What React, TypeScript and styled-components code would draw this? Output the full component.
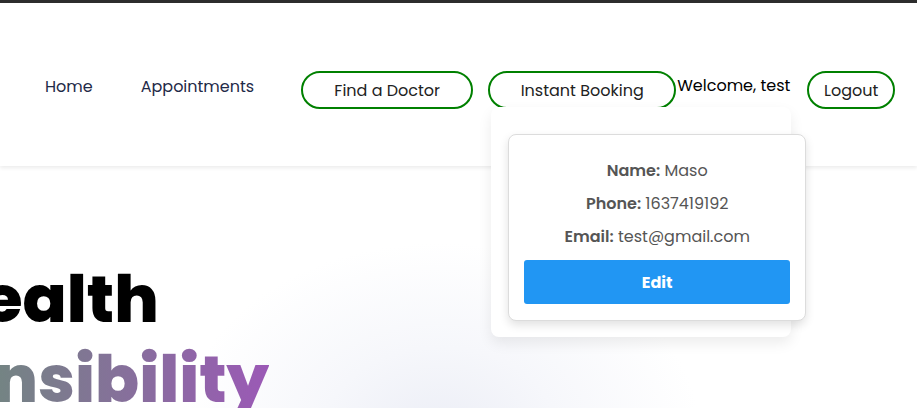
import React from 'react';
import styled, { createGlobalStyle } from 'styled-components';

const GlobalStyle = createGlobalStyle`
  html, body {
    margin: 0;
    padding: 0;
    background: #fff;
    overflow: hidden;
  }
  body {
    font-family: 'Poppins', 'Open Sans', 'Noto Sans', sans-serif;
  }
  * {
    box-sizing: border-box;
  }
`;

const Page = styled.div`
  width: 917px;
  height: 408px;
  border-top: 3px solid #2d2d2d;
  position: relative;
  overflow: hidden;
  background: radial-gradient(
    ellipse 260px 190px at 440px 430px,
    #eceef6 0%,
    #f6f7fb 45%,
    #ffffff 100%
  );
`;

// Navigation header
const Header = styled.header`
  position: relative;
  z-index: 2;
  height: 163px;
  background: #fff;
  box-shadow: 0 2px 4px rgba(0, 0, 0, 0.08);
  display: flex;
  align-items: center;
  padding: 68px 0 57px 45px;
`;

const NavLinks = styled.nav`
  display: flex;
  gap: 48px;
  padding-bottom: 8px;
`;

const NavLink = styled.a`
  color: #1f2a48;
  font-size: 16px;
  text-decoration: none;
  white-space: nowrap;
`;

const Actions = styled.div`
  display: flex;
  align-items: center;
  margin-left: 47px;
`;

const PillButton = styled.button<{ $width: number; $gap?: number }>`
  width: ${(p) => p.$width}px;
  height: 38px;
  margin-right: ${(p) => p.$gap ?? 0}px;
  border: 2px solid #008000;
  border-radius: 20px;
  background: #fff;
  color: #222;
  font-family: inherit;
  font-size: 16px;
  padding: 0;
  cursor: pointer;
  white-space: nowrap;
`;

const BookingWrap = styled.div`
  position: relative;
`;

const Welcome = styled.span`
  display: block;
  width: 130px;
  padding-bottom: 10px;
  color: #000;
  font-size: 16px;
  font-weight: 400;
  white-space: nowrap;
`;

// Dropdown under "Instant Booking"
const Dropdown = styled.div`
  position: absolute;
  top: 36px;
  left: 3px;
  width: 300px;
  height: 230px;
  padding: 27px 0 0 17px;
  background: #fff;
  border-radius: 8px;
  box-shadow: 0 6px 14px rgba(0, 0, 0, 0.08);
`;

const ProfileCard = styled.div`
  width: 298px;
  padding: 19px 15px 16px;
  background: #fff;
  border: 1px solid #dcdcdc;
  border-radius: 8px;
  box-shadow: 0 4px 10px rgba(0, 0, 0, 0.12);
  text-align: center;
`;

const InfoRow = styled.p`
  margin: 0;
  line-height: 33px;
  font-size: 16px;
  color: #555;

  strong {
    font-weight: 600;
  }
`;

const EditButton = styled.button`
  width: 100%;
  height: 44px;
  margin-top: 7px;
  border: none;
  border-radius: 3px;
  background: #2196f3;
  color: #fff;
  font-family: inherit;
  font-size: 16px;
  font-weight: 700;
  cursor: pointer;
`;

// Hero heading, partly cut off at the left edge
const Hero = styled.section`
  padding-top: 94px;
`;

const HeroTitle = styled.h1`
  width: 800px;
  margin: 0 0 0 -440px;
  text-align: center;
  font-family: 'Poppins', 'Open Sans', sans-serif;
  font-size: 65px;
  font-weight: 800;
  line-height: 80px;
  color: #000;
`;

const Gradient = styled.span`
  display: inline-block;
  background: linear-gradient(90deg, #4caf50 12%, #9b59b6 100%);
  -webkit-background-clip: text;
  background-clip: text;
  color: transparent;
`;

export default function App() {
  return (
    <>
      <GlobalStyle />
      <Page>
        <Header>
          <NavLinks>
            <NavLink href="#">Home</NavLink>
            <NavLink href="#">Appointments</NavLink>
          </NavLinks>
          <Actions>
            <PillButton $width={172} $gap={15}>Find a Doctor</PillButton>
            <BookingWrap>
              <PillButton $width={188} $gap={1}>Instant Booking</PillButton>
              <Dropdown>
                <ProfileCard>
                  <InfoRow><strong>Name:</strong> Maso</InfoRow>
                  <InfoRow><strong>Phone:</strong> 1637419192</InfoRow>
                  <InfoRow><strong>Email:</strong> test@gmail.com</InfoRow>
                  <EditButton>Edit</EditButton>
                </ProfileCard>
              </Dropdown>
            </BookingWrap>
            <Welcome>Welcome, test</Welcome>
            <PillButton $width={88}>Logout</PillButton>
          </Actions>
        </Header>
        <Hero>
          <HeroTitle>
            Your Health
            <br />
            <Gradient>Our Responsibility</Gradient>
          </HeroTitle>
        </Hero>
      </Page>
    </>
  );
}
